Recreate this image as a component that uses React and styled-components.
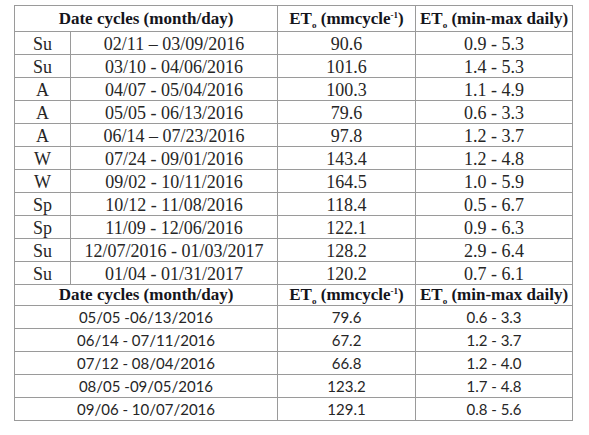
import React from 'react'
import styled, { createGlobalStyle } from 'styled-components'

const GlobalStyle = createGlobalStyle`
  body {
    margin: 0;
    background: #ffffff;
  }
`

const topRows = [
    ['Su', '02/11 \u2013 03/09/2016', '90.6', '0.9 - 5.3'],
    ['Su', '03/10 - 04/06/2016', '101.6', '1.4 - 5.3'],
    ['A', '04/07 - 05/04/2016', '100.3', '1.1 - 4.9'],
    ['A', '05/05 - 06/13/2016', '79.6', '0.6 - 3.3'],
    ['A', '06/14 \u2013 07/23/2016', '97.8', '1.2 - 3.7'],
    ['W', '07/24 - 09/01/2016', '143.4', '1.2 - 4.8'],
    ['W', '09/02 - 10/11/2016', '164.5', '1.0 - 5.9'],
    ['Sp', '10/12 - 11/08/2016', '118.4', '0.5 - 6.7'],
    ['Sp', '11/09 - 12/06/2016', '122.1', '0.9 - 6.3'],
    ['Su', '12/07/2016 - 01/03/2017', '128.2', '2.9 - 6.4'],
    ['Su', '01/04 - 01/31/2017', '120.2', '0.7 - 6.1'],
]

const bottomRows = [
    ['05/05 -06/13/2016', '79.6', '0.6 - 3.3'],
    ['06/14 - 07/11/2016', '67.2', '1.2 - 3.7'],
    ['07/12 - 08/04/2016', '66.8', '1.2 - 4.0'],
    ['08/05 -09/05/2016', '123.2', '1.7 - 4.8'],
    ['09/06 - 10/07/2016', '129.1', '0.8 - 5.6'],
]

function HeaderRow({ tall }) {
    return (
        <tr>
            <HeadCell colSpan={2} tall={tall}>Date cycles (month/day)</HeadCell>
            <HeadCell tall={tall}>ET<Sub>o</Sub> (mmcycle<Sup>-1</Sup>)</HeadCell>
            <HeadCell tall={tall}>ET<Sub>o</Sub> (min-max daily)</HeadCell>
        </tr>
    )
}

function App() {
    return (
        <Page>
            <GlobalStyle />
            <Table>
                <colgroup>
                    <col style={{ width: 56 }} />
                    <col style={{ width: 207 }} />
                    <col style={{ width: 138 }} />
                    <col style={{ width: 157 }} />
                </colgroup>
                <tbody>
                    <HeaderRow tall />
                    {topRows.map((r, i) => (
                        <tr key={i}>
                            <Cell>{r[0]}</Cell>
                            <Cell>{r[1]}</Cell>
                            <Cell>{r[2]}</Cell>
                            <Cell>{r[3]}</Cell>
                        </tr>
                    ))}
                    <HeaderRow />
                    {bottomRows.map((r, i) => (
                        <tr key={i}>
                            <Cell colSpan={2} sans>{r[0]}</Cell>
                            <Cell sans>{r[1]}</Cell>
                            <Cell sans>{r[2]}</Cell>
                        </tr>
                    ))}
                </tbody>
            </Table>
        </Page>
    )
}

export default App

const Page = styled.div`
    padding: 5px 0 0 14px;
`

const Table = styled.table`
    border-collapse: collapse;
    table-layout: fixed;
    width: 558px;
    border: 1px solid #8f8f8f;
`

const HeadCell = styled.td`
    height: ${props => props.tall ? '25px' : '20px'};
    padding: 0;
    border: 1px solid #9a9a9a;
    text-align: center;
    vertical-align: middle;
    font-family: "Liberation Serif", "Times New Roman", serif;
    font-weight: 700;
    font-size: 17px;
    line-height: 18px;
    color: #15151c;
    white-space: nowrap;
`

const Cell = styled.td`
    height: ${props => props.sans ? '22px' : '20px'};
    padding: ${props => props.sans ? '0' : '2px 0 0'};
    border: 1px solid #9a9a9a;
    text-align: center;
    vertical-align: middle;
    font-family: ${props => props.sans ? '"Lato", "Liberation Sans", sans-serif' : '"Liberation Serif", "Times New Roman", serif'};
    font-size: ${props => props.sans ? '15px' : '18px'};
    line-height: 18px;
    color: #262626;
    white-space: nowrap;
`

const Sub = styled.sub`
    font-size: 9px;
    vertical-align: -4px;
    line-height: 0;
`

const Sup = styled.sup`
    font-size: 9px;
    vertical-align: 6px;
    line-height: 0;
`
